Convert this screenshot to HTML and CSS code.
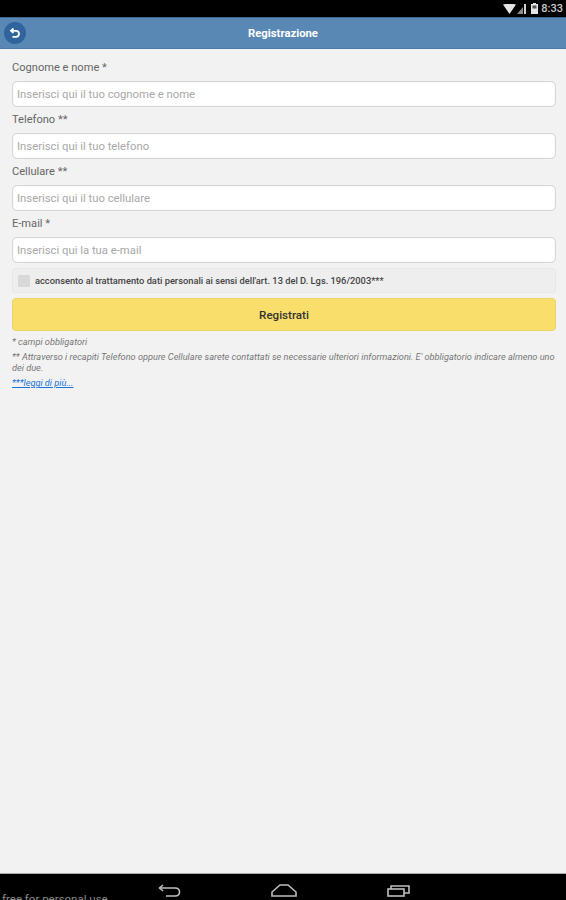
FILE: index.html
```html
<!DOCTYPE html>
<html lang="it">
<head>
  <meta charset="UTF-8">
  <meta name="viewport" content="width=device-width, initial-scale=1.0">
  <title>Registrazione</title>
  <link rel="stylesheet" href="styles.css">
</head>
<body>
  <div class="status-bar">
    <svg class="status-icon" width="13" height="10" viewBox="0 0 16 10" preserveAspectRatio="none"><path d="M0 0.5 Q8 -1 16 0.5 L8 10 Z" fill="#e4e4e4"/></svg>
    <svg class="status-icon signal" width="9" height="10" viewBox="0 0 9 10"><path d="M0 10 L6 3 V10 Z" fill="#8a8a8a"/><rect x="7" y="0" width="2" height="10" fill="#d0d0d0"/></svg>
    <svg class="status-icon battery" width="7" height="11" viewBox="0 0 7 11"><path d="M2 0 H5 V1 H7 V11 H0 V1 H2 Z" fill="#e4e4e4"/><rect x="1.5" y="2.5" width="4" height="3" fill="#555"/></svg>
    <span class="clock">8:33</span>
  </div>

  <header class="top-bar">
    <button class="back-btn" aria-label="Indietro">
      <svg width="12" height="12" viewBox="0 0 12 12" fill="none" stroke="#fff" stroke-width="1.8"><path d="M4.5 1.5 L2 3.8 L4.5 6"/><path d="M2.5 3.8 H7 Q10 3.8 10 6.8 Q10 9.8 7 9.8 H3.5"/></svg>
    </button>
    <h1>Registrazione</h1>
  </header>

  <main class="content">
    <form class="form">
      <div class="field">
        <label for="nome">Cognome e nome *</label>
        <input id="nome" type="text" placeholder="Inserisci qui il tuo cognome e nome">
      </div>
      <div class="field">
        <label for="telefono">Telefono **</label>
        <input id="telefono" type="text" placeholder="Inserisci qui il tuo telefono">
      </div>
      <div class="field">
        <label for="cellulare">Cellulare **</label>
        <input id="cellulare" type="text" placeholder="Inserisci qui il tuo cellulare">
      </div>
      <div class="field">
        <label for="email">E-mail *</label>
        <input id="email" type="text" placeholder="Inserisci qui la tua e-mail">
      </div>

      <div class="consent">
        <span class="check"></span>
        <span>acconsento al trattamento dati personali ai sensi dell'art. 13 del D. Lgs. 196/2003***</span>
      </div>

      <button class="submit" type="button">Registrati</button>
    </form>

    <div class="notes">
      <p>* campi obbligatori</p>
      <p>** Attraverso i recapiti Telefono oppure Cellulare sarete contattati se necessarie ulteriori informazioni. E' obbligatorio indicare almeno uno dei due.</p>
      <p><a href="#">***leggi di più...</a></p>
    </div>
  </main>

  <footer class="nav-bar">
    <span class="watermark">free for personal use</span>
    <svg class="nav-icon" width="23" height="13" viewBox="0 0 23 13" fill="none" stroke="#bdbdbd" stroke-width="1.6"><path d="M5 1 L1.5 4 L5 7"/><path d="M2 4 H17 Q21.5 4 21.5 8 Q21.5 12 17 12 H8"/></svg>
    <svg class="nav-icon" width="26" height="13" viewBox="0 0 26 13" fill="none" stroke="#bdbdbd" stroke-width="1.6"><path d="M1 12 V8 L9 1 H17 L25 8 V12 Z"/></svg>
    <svg class="nav-icon" width="23" height="13" viewBox="0 0 23 13" fill="none" stroke="#bdbdbd" stroke-width="1.6"><rect x="1" y="5" width="16" height="7"/><path d="M4 5 V2 H22 V9 H17"/></svg>
  </footer>
</body>
</html>
```

FILE: styles.css
```css
/* Pagina */
body {
  margin: 0;
  height: 900px;
  overflow: hidden;
  display: flex;
  flex-direction: column;
  font-family: Roboto, "Liberation Sans", sans-serif;
  background-color: #f2f2f2;
}

/* Barra di stato */
.status-bar {
  height: 17px;
  flex-shrink: 0;
  background-color: #000;
  display: flex;
  align-items: center;
  justify-content: flex-end;
  padding-right: 3px;
  gap: 1px;
}

.status-icon.signal {
  margin-right: 4px;
}

.status-icon.battery {
  margin-right: 2px;
}

.clock {
  color: #c8c8c8;
  font-size: 11px;
  font-weight: 500;
}

/* Intestazione */
.top-bar {
  height: 30px;
  flex-shrink: 0;
  background-color: #5a88b4;
  border-top: 1px solid #3d6890;
  border-bottom: 1px solid #4a7aa6;
  display: flex;
  align-items: center;
  justify-content: center;
  position: relative;
}

.top-bar h1 {
  margin: 0;
  color: #fff;
  font-size: 11.3px;
  font-weight: 700;
}

.back-btn {
  position: absolute;
  left: 4px;
  top: 4px;
  width: 22px;
  height: 22px;
  padding: 0;
  border: none;
  border-radius: 50%;
  background-color: #2f649c;
  display: flex;
  align-items: center;
  justify-content: center;
}

/* Contenuto */
.content {
  flex-grow: 1;
  padding: 11px 10px 0 12px;
}

.form {
  display: flex;
  flex-direction: column;
}

.field {
  display: flex;
  flex-direction: column;
  margin-bottom: 5px;
}

.field label {
  font-size: 11.1px;
  line-height: 14px;
  height: 14px;
  margin: 1px 0 6px;
  color: #666;
}

.field input {
  height: 26px;
  box-sizing: border-box;
  padding: 0 4px;
  border: 1px solid #d6d6d6;
  border-radius: 5px;
  background-color: #fff;
  box-shadow: inset 0 0 1px #ccc;
  font-family: inherit;
  font-size: 11.3px;
  color: #555;
}

.field input::placeholder {
  color: #a8a8a8;
  opacity: 1;
}

.consent {
  height: 25px;
  box-sizing: border-box;
  display: flex;
  align-items: center;
  gap: 5px;
  padding-left: 5px;
  background-color: #eeeeee;
  border: 1px solid #e8e8e8;
  border-radius: 3px;
  font-size: 9.3px;
  font-weight: 500;
  color: #444;
}

.check {
  width: 12px;
  height: 12px;
  background-color: #d8d8d8;
  border-radius: 1px;
}

.submit {
  height: 33px;
  margin-top: 5px;
  border: 1px solid #ecd36a;
  border-radius: 4px;
  background-color: #f9de6b;
  font-family: inherit;
  font-size: 11.6px;
  font-weight: 500;
  color: #333;
}

/* Note */
.notes {
  margin-top: 5px;
  font-size: 9.2px;
  font-style: italic;
  line-height: 11px;
  color: #777;
}

.notes p {
  margin: 0 0 4px;
}

.notes a {
  color: #1a73d8;
}

/* Barra di navigazione */
.nav-bar {
  height: 27px;
  flex-shrink: 0;
  background-color: #000;
  border-top: 1px solid #a8a8a8;
  display: flex;
  justify-content: center;
  align-items: flex-start;
  padding: 10px 0 0 1px;
  gap: 90px;
  position: relative;
  box-sizing: border-box;
  overflow: hidden;
}

.nav-icon {
  flex-shrink: 0;
}

.watermark {
  position: absolute;
  left: 2px;
  top: 18px;
  font-size: 11.5px;
  color: #8a8a8a;
}
```
